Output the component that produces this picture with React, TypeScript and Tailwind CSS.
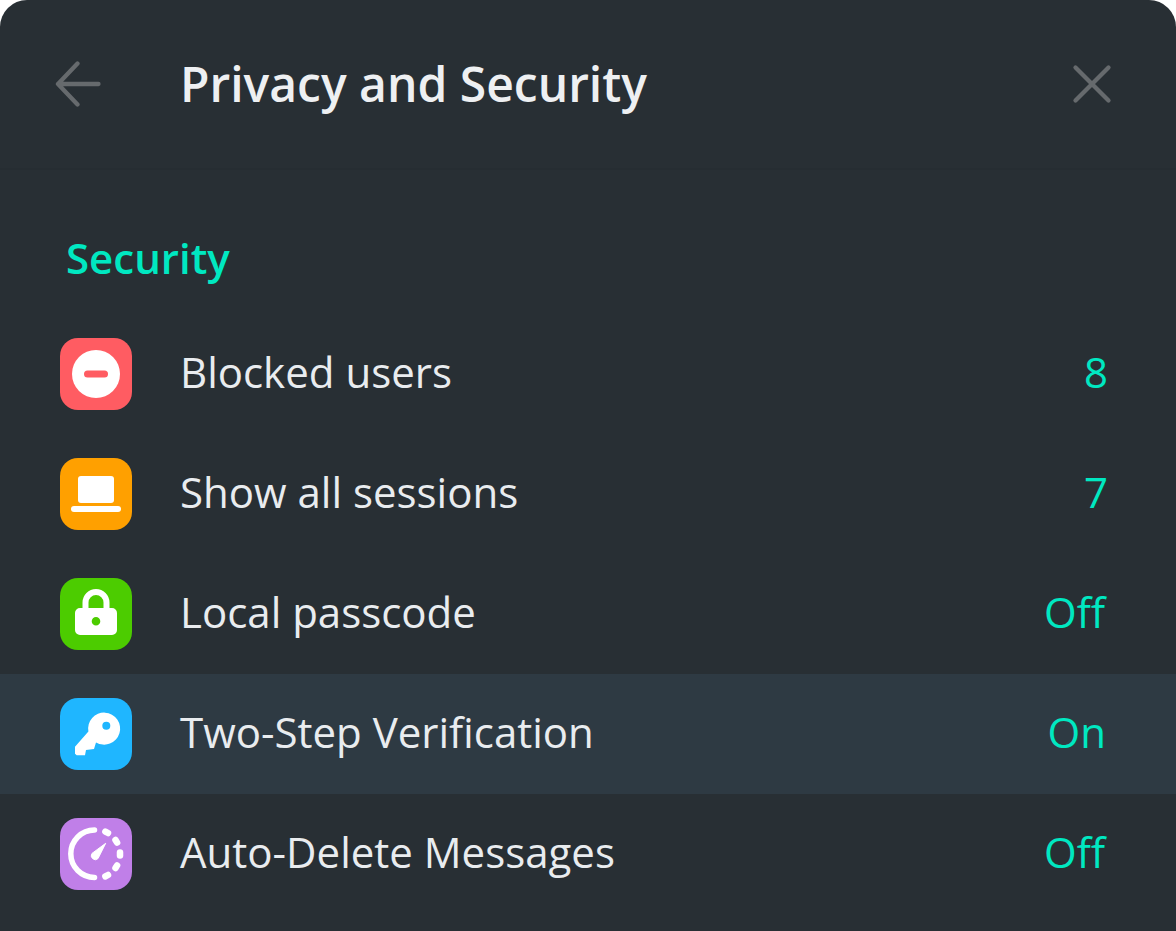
const font = "[font-family:'Open_Sans',sans-serif]";

function Tile({ bg, children }: { bg: string; children: React.ReactNode }) {
  return (
    <div className={`w-[72px] h-[72px] rounded-[18px] shrink-0 ${bg}`}>
      <svg width="72" height="72" viewBox="0 0 72 72" fill="none">
        {children}
      </svg>
    </div>
  );
}

function Row({ icon, label, value, active, nudge }: { icon: React.ReactNode; label: string; value: string; active?: boolean; nudge?: string }) {
  return (
    <div className={`h-[120px] flex items-center pl-[60px] pr-[71px] ${active ? "bg-[#2e3a43]" : ""}`}>
      {icon}
      <span className="ml-[48px] flex-1 text-[42px] leading-[54px] -translate-y-[2px] text-[#e9ecef]">{label}</span>
      <span className={`text-[42px] leading-[54px] -translate-y-[2px] text-[#00e8c1] ${nudge ?? ""}`}>{value}</span>
    </div>
  );
}

export default function App() {
  return (
    <div className={`w-[1176px] h-[931px] bg-white overflow-hidden ${font}`}>
      <div className="h-full bg-[#282f34] rounded-t-[27px]">
        <header className="h-[170px] flex items-center border-b-2 border-[#262d32] pl-[55px] pr-[64px]">
          <svg width="48" height="48" viewBox="0 0 48 48" fill="none" className="shrink-0">
            <path d="M43.500 24H3M3 24L22.500 3.500M3 24L22.500 44.500" stroke="#666a6d" strokeWidth="4.300" strokeLinecap="round" strokeLinejoin="round" />
          </svg>
          <h1 className="ml-[77px] flex-1 text-[48px] font-semibold leading-[60px] text-[#eef0f2]">Privacy and Security</h1>
          <svg width="40" height="40" viewBox="0 0 40 40" fill="none" className="shrink-0">
            <path d="M3.500 3.500L36.500 36.500M36.500 3.500L3.500 36.500" stroke="#666a6d" strokeWidth="4.300" strokeLinecap="round" />
          </svg>
        </header>
        <div className="h-[144px] flex items-end pl-[66px] pb-[29px]">
          <h2 className="text-[42px] font-semibold leading-[54px] text-[#00e8c1]">Security</h2>
        </div>
        <Row
          nudge="-mr-[3px]"
          label="Blocked users"
          value="8"
          icon={
            <Tile bg="bg-[#ff5c62]">
              <circle cx="36" cy="36" r="24" fill="#fff" />
              <rect x="24" y="32.5" width="24" height="7" rx="3.5" fill="#ff5c62" />
            </Tile>
          }
        />
        <Row
          nudge="-mr-[3px]"
          label="Show all sessions"
          value="7"
          icon={
            <Tile bg="bg-[#ffa000]">
              <rect x="18" y="18" width="36" height="27" rx="3" fill="#fff" />
              <rect x="11" y="48" width="50" height="6" rx="3" fill="#fff" />
            </Tile>
          }
        />
        <Row
          label="Local passcode"
          value="Off"
          icon={
            <Tile bg="bg-[#4ccc00]">
              <path d="M25.500 32V24.500a10.500 10.500 0 0 1 21 0V32" stroke="#fff" strokeWidth="6" />
              <path
                fillRule="evenodd"
                clipRule="evenodd"
                d="M20 30h32a5 5 0 0 1 5 5v17a5 5 0 0 1-5 5H20a5 5 0 0 1-5-5V35a5 5 0 0 1 5-5Zm16 17.500a4.300 4.300 0 1 0 0-8.600 4.300 4.300 0 0 0 0 8.600Z"
                fill="#fff"
              />
            </Tile>
          }
        />
        <Row
          active
          nudge="-mr-[1px]"
          label="Two-Step Verification"
          value="On"
          icon={
            <Tile bg="bg-[#1fb6ff]">
              <path
                fillRule="evenodd"
                clipRule="evenodd"
                d="M28.400 33.500A16 16 0 1 1 36 44.400L34 51L26 52L25 57.300H16.700L15 55.700V48.700ZM46.300 23.700a4 4 0 1 0 0 8 4 4 0 0 0 0-8Z"
                fill="#fff"
              />
            </Tile>
          }
        />
        <Row
          label="Auto-Delete Messages"
          value="Off"
          icon={
            <Tile bg="bg-[#c07fe8]">
              <path d="M34.500 12A23.700 23.700 0 0 0 34.500 59.400" stroke="#fff" strokeWidth="5.500" strokeLinecap="round" />
              <g stroke="#fff" strokeWidth="6.500" strokeLinecap="round">
                <path d="M45.400 13.600L48 15" />
                <path d="M55.500 22L57.100 24.600" />
                <path d="M60 34.500V37.500" />
                <path d="M57.100 47.400L55.500 50" />
                <path d="M48 57L45.400 58.400" />
              </g>
              <path d="M45.700 25.300L38 40.600A4 4 0 0 1 32 35.400Z" fill="#fff" strokeLinejoin="round" stroke="#fff" strokeWidth="1" />
            </Tile>
          }
        />
      </div>
    </div>
  );
}
